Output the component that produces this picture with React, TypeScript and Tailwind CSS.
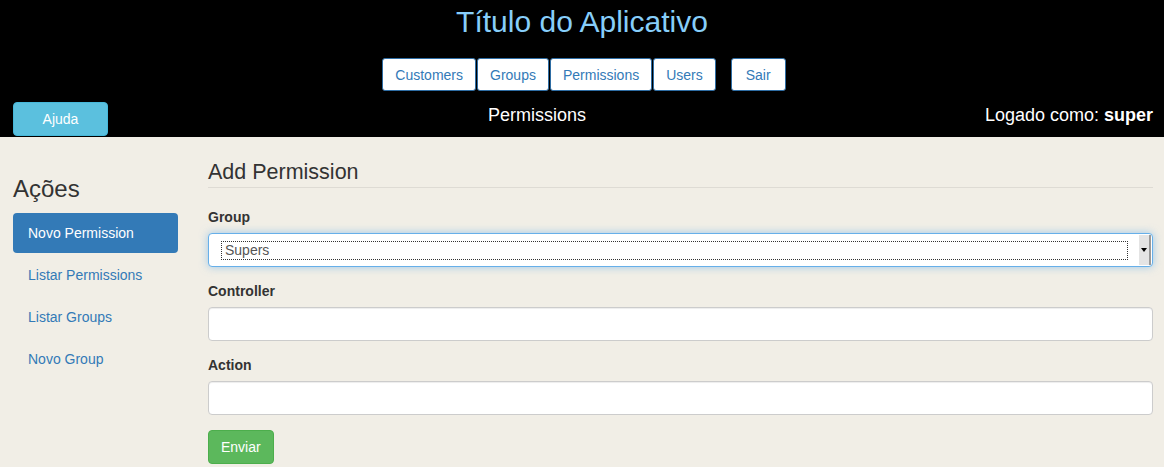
const topLinks = ['Customers', 'Groups', 'Permissions', 'Users'];

const sideLinks = ['Listar Permissions', 'Listar Groups', 'Novo Group'];

function NavButton({ label, className = 'px-[12px]' }: { label: string; className?: string }) {
  return (
    <button
      className={`h-[33px] bg-white border border-[#2e6da4] rounded-[3px] text-[14px] text-[#337ab7] leading-[20px] ${className}`}
    >
      {label}
    </button>
  );
}

function Header() {
  return (
    <header className="bg-black h-[137px] flex flex-col">
      <h1 className="mt-[5px] text-center text-[30px] leading-[33px] text-[#87cefa]">Título do Aplicativo</h1>

      {/* menu principal */}
      <nav className="mt-[20px] flex justify-center pl-[4px]">
        <div className="flex gap-px">
          {topLinks.map((l) => (
            <NavButton key={l} label={l} />
          ))}
        </div>
        <NavButton label="Sair" className="ml-[15px] px-[14px]" />
      </nav>

      <div className="mt-[11px] flex items-start">
        <div className="w-[290px] pl-[13px]">
          <button className="w-[95px] h-[34px] bg-[#5bc0de] border border-[#46b8da] rounded-[4px] text-white text-[14px]">
            Ajuda
          </button>
        </div>
        <div className="w-[494px] pt-[3px] text-center text-white text-[18px] leading-[20px]">Permissions</div>
        <div className="flex-1 pt-[3px] pr-[11px] text-right text-white text-[18px] leading-[20px]">
          Logado como: <b>super</b>
        </div>
      </div>
    </header>
  );
}

function Sidebar() {
  return (
    <aside className="w-[165px] pt-[39px]">
      <h3 className="text-[24px] leading-[26px] text-[#333]">Ações</h3>
      <ul className="mt-[11px] flex flex-col gap-[2px] text-[14px] leading-[20px]">
        <li className="bg-[#337ab7] text-white rounded-[4px] px-[15px] py-[10px]">Novo Permission</li>
        {sideLinks.map((l) => (
          <li key={l} className="px-[15px] py-[10px] text-[#337ab7]">
            {l}
          </li>
        ))}
      </ul>
    </aside>
  );
}

function TextField({ label }: { label: string }) {
  return (
    <div className="mb-[14px]">
      <label className="block mb-[6px] text-[14px] leading-[20px] font-bold text-[#333]">{label}</label>
      <input
        type="text"
        className="block w-full h-[34px] bg-white border border-[#ccc] rounded-[4px] shadow-[inset_0_1px_1px_rgba(0,0,0,0.075)] outline-none"
      />
    </div>
  );
}

function PermissionForm() {
  return (
    <main className="flex-1 pt-[24px]">
      <h3 className="text-[21.5px] leading-[23px] text-[#333] pb-[3px] border-b border-[#dedbd4]">Add Permission</h3>

      <div className="mt-[19px]">
        <div className="mb-[14px]">
          <label className="block mb-[6px] text-[14px] leading-[20px] font-bold text-[#333]">Group</label>
          {/* select com foco */}
          <div className="h-[34px] bg-white border border-[#66afe9] rounded-[4px] shadow-[0_0_8px_rgba(102,175,233,0.6)] flex items-stretch">
            <div className="flex-1 flex items-center pl-[12px] pr-[11px]">
              <div className="flex-1 h-[19px] border border-dotted border-[#333] flex items-center pl-[3px] text-[14px] text-[#555]">
                Supers
              </div>
            </div>
            <div className="w-[12px] my-[1px] mr-[1px] bg-[#e4e4e4] border-r-2 border-[#999] flex items-center justify-center">
              <div className="w-0 h-0 border-l-[3px] border-r-[3px] border-t-[4px] border-l-transparent border-r-transparent border-t-black" />
            </div>
          </div>
        </div>

        <TextField label="Controller" />
        <TextField label="Action" />

        <button className="mt-px h-[34px] px-[12px] bg-[#5cb85c] border border-[#4cae4c] rounded-[4px] text-white text-[14px]">
          Enviar
        </button>
      </div>
    </main>
  );
}

export default function App() {
  return (
    <div className="w-[1164px] h-[467px] overflow-hidden bg-[#f1eee6] font-['Liberation_Sans',Arial,sans-serif]">
      <Header />
      <div className="flex gap-[30px] pl-[13px] pr-[11px]">
        <Sidebar />
        <PermissionForm />
      </div>
    </div>
  );
}
